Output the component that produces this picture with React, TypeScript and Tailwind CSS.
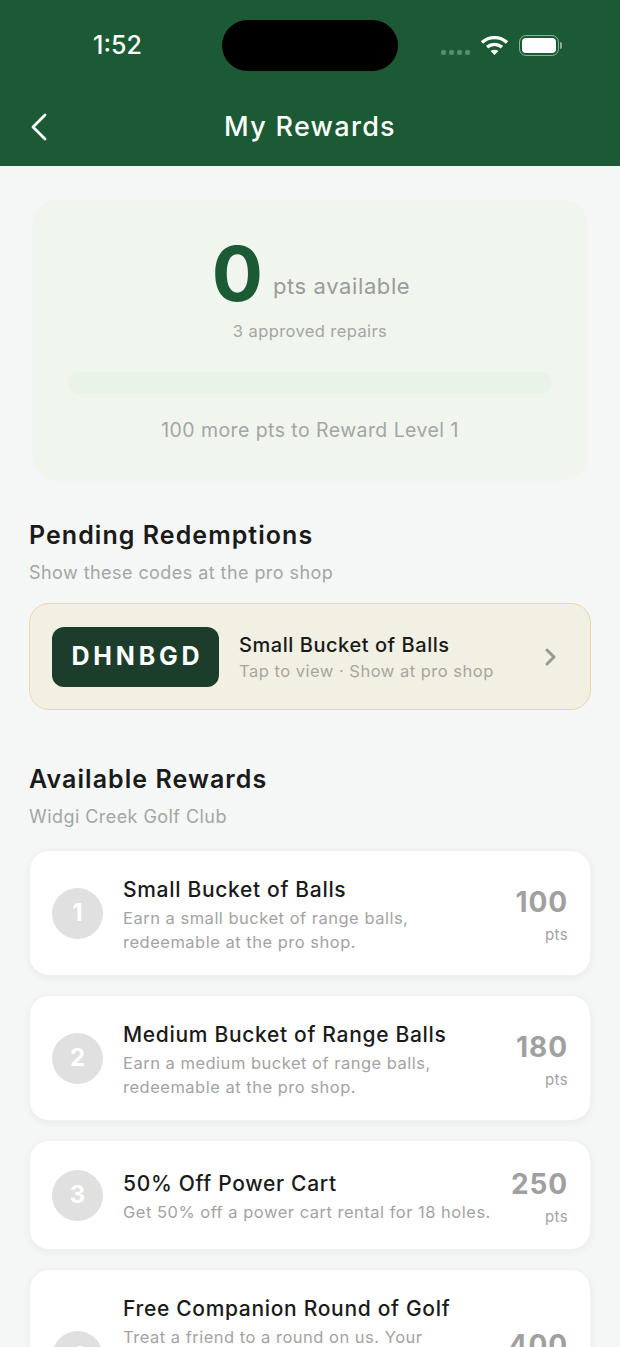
const font = { fontFamily: 'Inter, "Noto Sans", sans-serif' };

type Reward = { n: number; title: string; desc: string[]; pts: number };
const rewards: Reward[] = [
  { n: 1, title: "Small Bucket of Balls", desc: ["Earn a small bucket of range balls,", "redeemable at the pro shop."], pts: 100 },
  { n: 2, title: "Medium Bucket of Range Balls", desc: ["Earn a medium bucket of range balls,", "redeemable at the pro shop."], pts: 180 },
  { n: 3, title: "50% Off Power Cart", desc: ["Get 50% off a power cart rental for 18 holes."], pts: 250 },
  { n: 4, title: "Free Companion Round of Golf", desc: ["Treat a friend to a round on us. Your", "companion plays free with a paid", "round, any day of the week at", "the club."], pts: 400 },
];

function RewardCard({ r }: { r: Reward }) {
  return (
    <div className="flex items-center rounded-[20px] bg-white pl-[22px] pr-[22px] py-[21.5px] shadow-[0_2px_8px_rgba(0,0,0,0.05)] border border-[#f0f1f0]">
      <div className="flex h-[51px] w-[51px] shrink-0 items-center justify-center rounded-full bg-[#e0e0e0] text-[24px] font-bold text-white">{r.n}</div>
      <div className="ml-[20px] min-w-0 flex-1 pt-[3px]">
        <div className="text-[21px] leading-[28px] font-medium tracking-[0.68px] text-[#1a1a1a] whitespace-nowrap">{r.title}</div>
        <div className="mt-[2px] text-[16.5px] leading-[24px] tracking-[0.5px] text-[#a3a3a3] whitespace-nowrap">
          {r.desc.map((d) => (
            <div key={d}>{d}</div>
          ))}
        </div>
      </div>
      <div className="flex shrink-0 flex-col items-end pt-[3px] pb-[1px]">
        <div className="text-[28px] leading-[36px] font-bold tracking-[0.9px] text-[#a0a0a0]">{r.pts}</div>
        <div className="mt-[5px] text-[15px] leading-[20px] tracking-[0.4px] text-[#a3a3a3]">pts</div>
      </div>
    </div>
  );
}

export default function App() {
  return (
    <div style={font} className="h-[1347px] w-[620px] overflow-hidden bg-[#f5f7f6]">
      <header className="h-[166px] bg-[#1b5a34] text-white">
        <div className="flex items-center pt-[20px]">
          <div className="ml-[93px] w-[129px] text-[25px] font-medium leading-[51px]">1:52</div>
          <div className="h-[51px] w-[176px] rounded-full bg-black" />
          <div className="ml-[43px] flex gap-[3px] pt-[13px]">
            {[0, 1, 2, 3].map((i) => (
              <span key={i} className="h-[5px] w-[5px] rounded-[2px] bg-[#5c8a6e]" />
            ))}
          </div>
          <svg className="ml-[10px] mb-[2px]" width="29" height="22" viewBox="0 0 29 22" fill="none" stroke="white" strokeWidth="3.4">
            <path d="M2 8.5C9 2 20 2 27 8.5" />
            <path d="M7 13.2C11.5 9.6 17.5 9.6 22 13.2" />
            <path d="M14.5 21L10.6 17C13 15.4 16 15.4 18.4 17Z" fill="white" stroke="none" />
          </svg>
          <div className="ml-[10px] flex items-center">
            <div className="flex h-[21px] w-[40px] items-center justify-center rounded-[7px] border-[1.5px] border-[#8fb09c]">
              <div className="h-[15px] w-[34px] rounded-[4px] bg-white" />
            </div>
            <div className="ml-[1px] h-[7px] w-[2px] rounded-r-full bg-[#8fb09c]" />
          </div>
        </div>
        <div className="mt-[30px] flex h-[52px] items-center">
          <svg className="ml-[29px] shrink-0" width="19" height="30" viewBox="0 0 19 30" fill="none" stroke="white" strokeWidth="2.8" strokeLinecap="round" strokeLinejoin="round">
            <path d="M16 3L4 15L16 27" />
          </svg>
          <div className="ml-[-48px] flex-1 text-center text-[27px] font-medium tracking-[1.3px]">My Rewards</div>
        </div>
      </header>

      <main className="px-[29px]">
        <section className="mx-[4px] mt-[34px] h-[279px] rounded-[24px] bg-[#f0f5ee] px-[35px] pt-[31px] shadow-[0_1px_4px_rgba(0,0,0,0.02)]">
          <div className="flex items-end justify-center pl-[2px]">
            <span className="text-[76px] leading-[84px] font-bold text-[#1b5a34]">0</span>
            <span className="ml-[10px] mb-[15px] text-[22px] leading-[28px] tracking-[0.6px] text-[#999c99]">pts available</span>
          </div>
          <div className="mt-[5px] text-center text-[16.5px] leading-[22px] tracking-[0.4px] text-[#a3a6a3]">3 approved repairs</div>
          <div className="mt-[30px] h-[22px] rounded-full bg-[#e8f4e8]" />
          <div className="mt-[23px] text-center text-[19.5px] leading-[26px] tracking-[0.43px] text-[#a3a6a3]">100 more pts to Reward Level 1</div>
        </section>

        <h2 className="mt-[39px] text-[25px] leading-[34px] font-semibold tracking-[1.05px] text-[#1a1a1a]">Pending Redemptions</h2>
        <p className="mt-[9px] text-[18px] leading-[24px] tracking-[0.44px] text-[#a3a6a3]">Show these codes at the pro shop</p>

        <div className="mt-[18px] flex h-[107px] items-center rounded-[20px] border-[1.5px] border-[#e8d9a8] bg-[#f2f0e2] pl-[22px]">
          <div className="flex h-[60px] w-[167px] items-center justify-center rounded-[12px] bg-[#1c3d2b] pl-[4px] text-[25px] font-bold tracking-[3.8px] text-white">DHNBGD</div>
          <div className="ml-[20px] flex-1 pt-[2px]">
            <div className="text-[20px] leading-[26px] font-medium tracking-[0.55px] text-[#1a1a1a]">Small Bucket of Balls</div>
            <div className="mt-[1px] text-[16.5px] leading-[24px] tracking-[0.5px] text-[#a8a69c]">Tap to view · Show at pro shop</div>
          </div>
          <svg className="mr-[33px]" width="13" height="20" viewBox="0 0 13 20" fill="none" stroke="#9a9a94" strokeWidth="3" strokeLinecap="round" strokeLinejoin="round">
            <path d="M3 3L10 10L3 17" />
          </svg>
        </div>

        <h2 className="mt-[52px] text-[25px] leading-[34px] font-semibold tracking-[1.05px] text-[#1a1a1a]">Available Rewards</h2>
        <p className="mt-[9px] text-[18px] leading-[24px] tracking-[0.44px] text-[#a3a6a3]">Widgi Creek Golf Club</p>

        <div className="mt-[21px] flex flex-col gap-[19px]">
          {rewards.map((r) => (
            <RewardCard key={r.n} r={r} />
          ))}
        </div>
      </main>
    </div>
  );
}
